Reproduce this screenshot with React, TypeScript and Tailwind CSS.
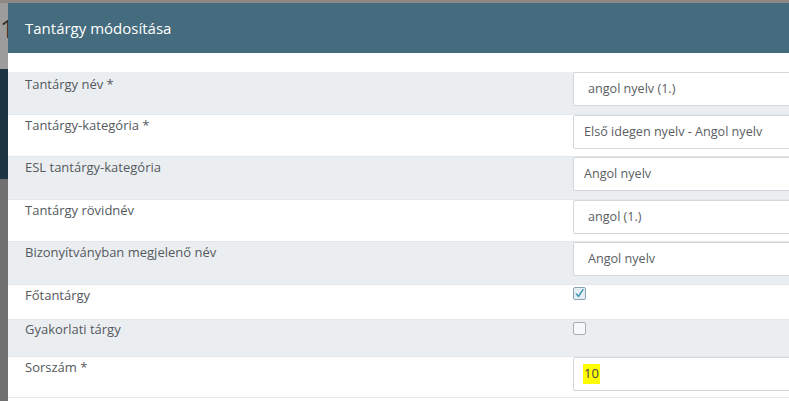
const rows: {
  label: string;
  h: string;
  pt: string;
  bg: string;
  kind: "input" | "check";
  value?: string;
  checked?: boolean;
  indent?: boolean;
  mark?: boolean;
}[] = [
  { label: "Tantárgy név *", h: "h-[43px]", pt: "pt-[3px]", bg: "bg-[#ebeef1]", kind: "input", value: "angol nyelv (1.)", indent: true },
  { label: "Tantárgy-kategória *", h: "h-[42px]", pt: "pt-[1px]", bg: "bg-white", kind: "input", value: "Első idegen nyelv - Angol nyelv" },
  { label: "ESL tantárgy-kategória", h: "h-[43px]", pt: "pt-[1px]", bg: "bg-[#ebeef1]", kind: "input", value: "Angol nyelv" },
  { label: "Tantárgy rövidnév", h: "h-[42px]", pt: "pt-[1px]", bg: "bg-white", kind: "input", value: "angol (1.)", indent: true },
  { label: "Bizonyítványban megjelenő név", h: "h-[43px]", pt: "pt-[1px]", bg: "bg-[#ebeef1]", kind: "input", value: "Angol nyelv", indent: true },
  { label: "Főtantárgy", h: "h-[35px]", pt: "pt-[1px]", bg: "bg-white", kind: "check", checked: true },
  { label: "Gyakorlati tárgy", h: "h-[37px]", pt: "pt-0", bg: "bg-[#ebeef1]", kind: "check" },
  { label: "Sorszám *", h: "h-[41px]", pt: "pt-[1px]", bg: "bg-white", kind: "input", value: "10", mark: true },
];

function Checkbox({ checked }: { checked?: boolean }) {
  return (
    <div
      className={
        "mt-[2px] flex h-[13px] w-[13px] items-center justify-center rounded-[2px] border " +
        (checked ? "border-[#8aa3b3] bg-[#e6eef4]" : "border-[#a9adb2] bg-[#f7f8f9]")
      }
    >
      {checked && (
        <svg viewBox="0 0 12 12" className="h-[11px] w-[11px]">
          <path d="M2.5 6.5 L5 9 L9.8 1.8" fill="none" stroke="#3f97b6" strokeWidth="1.6" strokeLinecap="round" />
        </svg>
      )}
    </div>
  );
}

export default function App() {
  return (
    <div className="flex h-[401px] w-[789px] flex-col overflow-hidden bg-[#6f6f6f] font-['Open_Sans',sans-serif]">
      <div className="h-[3px] w-full shrink-0 bg-[#8d8883]" />
      <div className="flex flex-1">
        <div className="flex w-[8px] shrink-0 flex-col">
          <div className="h-[66px] overflow-hidden bg-[#9c9c9c] pt-[12px] text-[26px] leading-none text-[#2c2c2c]">1</div>
          <div className="h-[110px] bg-[#1d3541]" />
          <div className="flex-1 bg-[#707070]" />
        </div>
        <div className="flex w-[800px] shrink-0 flex-col bg-white">
          <div className="flex h-[50px] items-center bg-[#456c7e] pl-[17px] text-[15px] text-white">
            Tantárgy módosítása
          </div>
          <div className="h-[19px]" />
          {rows.map((r) => (
            <div key={r.label} className={"flex border-b border-[#e4e7ea] " + r.h + " " + r.bg}>
              <div
                className={
                  "w-[565px] shrink-0 pl-[17px] text-[13px] font-medium leading-[18px] text-[#55595e] " + r.pt
                }
              >
                {r.label}
              </div>
              <div className="flex-1">
                {r.kind === "input" ? (
                  <div
                    className={
                      "flex h-[34px] items-center rounded-[2px] border border-[#d3d7db] bg-white text-[12.6px] text-[#5a5e63] " +
                      (r.indent ? "pl-[14px]" : r.mark ? "pl-[9px]" : "pl-[10px]")
                    }
                  >
                    {r.mark ? <span className="bg-[#ffff00] px-[1px] text-[13px] text-[#444]">{r.value}</span> : r.value}
                  </div>
                ) : (
                  <Checkbox checked={r.checked} />
                )}
              </div>
            </div>
          ))}
        </div>
      </div>
    </div>
  );
}
